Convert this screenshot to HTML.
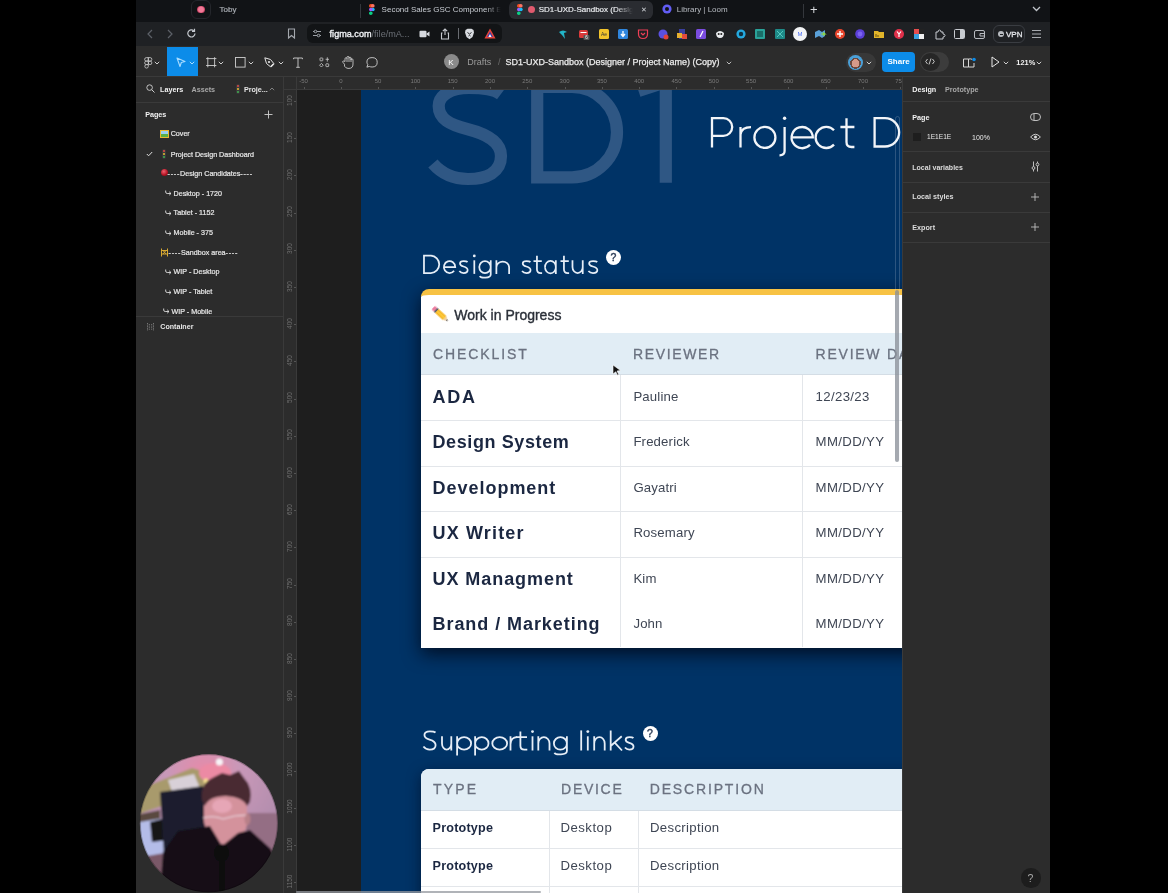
<!DOCTYPE html><html><head><meta charset="utf-8"><style>
html,body{margin:0;padding:0;width:1168px;height:893px;overflow:hidden;background:#000;}
body{position:relative;font-family:'Liberation Sans',sans-serif;will-change:transform;}
.t{position:absolute;white-space:nowrap;}
.r{position:absolute;}
svg{position:absolute;overflow:visible;}
</style></head><body>

<div class="r" style="left:136px;top:0px;width:914px;height:22px;background:#111316;"></div>
<div class="r" style="left:136px;top:22px;width:914px;height:24px;background:#1f2124;"></div>
<div class="r" style="left:191px;top:0px;width:20px;height:19px;background:transparent;border:1px solid #24262b;border-radius:6px;box-sizing:border-box;"></div>
<div class="r" style="left:197.3px;top:5.8px;width:7.5px;height:7.5px;border-radius:50%;background:radial-gradient(circle,#f27a98 0 45%,#c84060 70%,#6a3050 100%);"></div>
<div class="t" style="left:219.6px;top:5.8px;font-size:8px;line-height:8px;color:#a8acb2;font-weight:normal;letter-spacing:0px;-webkit-text-stroke:0.2px #a8acb2;">Toby</div>
<div class="r" style="left:360px;top:4px;width:1px;height:14px;background:#34373c;"></div>
<svg style="left:368px;top:4px" width="7" height="11" viewBox="0 0 7 11"><circle cx="5" cy="5.5" r="1.7" fill="#1abcfe"/><rect x="1" y="0" width="4" height="3.6" rx="1.7" fill="#f24e1e"/><rect x="3" y="0" width="3.6" height="3.6" rx="1.7" fill="#ff7262"/><rect x="1" y="3.7" width="3.6" height="3.6" rx="1.7" fill="#a259ff"/><rect x="1" y="7.4" width="3.6" height="3.6" rx="1.7" fill="#0acf83"/></svg>
<div class="t" style="left:381.6px;top:5.5px;font-size:8px;line-height:8px;color:#c8ccd2;font-weight:normal;letter-spacing:0px;">Second Sales GSC Component Ex</div>
<div class="r" style="left:486px;top:2px;width:20px;height:17px;background:linear-gradient(90deg,rgba(17,19,22,0),#111316 75%);"></div>
<div class="r" style="left:509px;top:1px;width:144px;height:18px;background:#2a2c31;border-radius:6px;"></div>
<svg style="left:516px;top:4px" width="7" height="11" viewBox="0 0 7 11"><rect x="1" y="0" width="4" height="3.6" rx="1.7" fill="#f24e1e"/><rect x="3" y="0" width="3.6" height="3.6" rx="1.7" fill="#ff7262"/><rect x="1" y="3.7" width="3.6" height="3.6" rx="1.7" fill="#a259ff"/><circle cx="5" cy="5.5" r="1.7" fill="#1abcfe"/><rect x="1" y="7.4" width="3.6" height="3.6" rx="1.7" fill="#0acf83"/></svg>
<div class="r" style="left:528px;top:6px;width:7px;height:7px;border-radius:50%;background:#e05a6e;"></div>
<div class="t" style="left:538.7px;top:5.5px;font-size:8px;line-height:8px;color:#eef0f3;font-weight:normal;letter-spacing:0px;-webkit-text-stroke:0.15px #eef0f3;">SD1-UXD-Sandbox (Design</div>
<div class="r" style="left:616px;top:2px;width:24px;height:16px;background:linear-gradient(90deg,rgba(42,44,49,0),#2a2c31 70%);"></div>
<div class="t" style="left:641.0px;top:6.4px;font-size:7px;line-height:7px;color:#d0d3d8;font-weight:normal;letter-spacing:0px;">✕</div>
<svg style="left:662px;top:4px" width="10" height="10" viewBox="0 0 10 10"><circle cx="5" cy="5" r="4.6" fill="#625df5"/><circle cx="5" cy="5" r="2" fill="#111316"/></svg>
<div class="t" style="left:676.7px;top:5.5px;font-size:8px;line-height:8px;color:#b8bcc2;font-weight:normal;letter-spacing:0px;">Library | Loom</div>
<div class="r" style="left:803px;top:4px;width:1px;height:14px;background:#34373c;"></div>
<div class="t" style="left:810.0px;top:2.5px;font-size:13px;line-height:13px;color:#d8dade;font-weight:normal;letter-spacing:0px;">+</div>
<svg style="left:1032px;top:6px" width="9" height="6" viewBox="0 0 9 6"><path d="M1 1 L4.5 4.5 L8 1" stroke="#c0c4ca" stroke-width="1.3" fill="none"/></svg>
<svg style="left:146px;top:29px" width="8" height="10" viewBox="0 0 8 10"><path d="M6 1 L2 5 L6 9" stroke="#5d6168" stroke-width="1.2" fill="none"/></svg>
<svg style="left:166px;top:29px" width="8" height="10" viewBox="0 0 8 10"><path d="M2 1 L6 5 L2 9" stroke="#5d6168" stroke-width="1.2" fill="none"/></svg>
<svg style="left:186px;top:28px" width="11" height="11" viewBox="0 0 11 11"><path d="M9 5.5 A3.6 3.6 0 1 1 7.8 2.7" stroke="#c4c8ce" stroke-width="1.2" fill="none"/><path d="M8.5 0.8 L8.5 3.3 L6 3.3" stroke="#c4c8ce" stroke-width="1.2" fill="none"/></svg>
<svg style="left:287px;top:28px" width="9" height="11" viewBox="0 0 9 11"><path d="M1.5 1 H7.5 V10 L4.5 7.5 L1.5 10 Z" stroke="#a4a8ae" stroke-width="1.1" fill="none"/></svg>
<div class="r" style="left:307px;top:24px;width:195px;height:19px;background:#121416;border-radius:6px;"></div>
<svg style="left:312px;top:29px" width="10" height="9" viewBox="0 0 10 9"><path d="M1 2.5 H9 M1 6.5 H9" stroke="#9ca0a6" stroke-width="1"/><circle cx="3.5" cy="2.5" r="1.3" fill="#121416" stroke="#9ca0a6" stroke-width="1"/><circle cx="6.5" cy="6.5" r="1.3" fill="#121416" stroke="#9ca0a6" stroke-width="1"/></svg>
<div class="t" style="left:329.6px;top:30.1px;font-size:9.1px;line-height:9.1px;color:#f0f2f5;font-weight:normal;letter-spacing:0px;"><span style='-webkit-text-stroke:0.35px #f0f2f5'>figma.com</span><span style='color:#6d7178'>/file/mA...</span></div>
<svg style="left:419px;top:30px" width="11" height="8" viewBox="0 0 11 8"><rect x="0.5" y="0.8" width="7" height="6.4" rx="1" fill="#d6d9de"/><path d="M7.5 3.5 L10.5 1.5 V6.5 L7.5 4.5Z" fill="#d6d9de"/></svg>
<svg style="left:440px;top:28px" width="10" height="12" viewBox="0 0 10 12"><path d="M5 1 V7 M2.8 3.2 L5 1 L7.2 3.2" stroke="#c6c9ce" stroke-width="1.1" fill="none"/><path d="M2.5 5 H1.5 V11 H8.5 V5 H7.5" stroke="#c6c9ce" stroke-width="1.1" fill="none"/></svg>
<div class="r" style="left:458px;top:28px;width:1px;height:11px;background:#6a6d72;"></div>
<svg style="left:464px;top:28px" width="11" height="12" viewBox="0 0 11 12"><path d="M1.5 2 L3.5 0.7 H7.5 L9.5 2 L10 4.5 L8.5 9 L5.5 11.3 L2.5 9 L1 4.5Z" fill="#d8dbe0"/><path d="M3.5 4.5 L5.5 6 L7.5 4.5 M4.5 8 L5.5 7.3 L6.5 8" stroke="#121416" stroke-width="0.9" fill="none"/></svg>
<svg style="left:484px;top:28px" width="12" height="11" viewBox="0 0 12 11"><path d="M6 0.5 L11.5 10.5 H0.5Z" fill="#e8443a"/><path d="M6 3.5 L9 9 H3Z" fill="#3c3ea8"/><path d="M6 6 L7.6 9 H4.4Z" fill="#fff"/></svg>
<svg style="left:557.6px;top:29px" width="11" height="11" viewBox="0 0 11 11"><path d="M1 3 Q5 0 9 3 L6 4 L7 10 L4 6 Z" fill="#22b5c8"/></svg>
<svg style="left:578.6px;top:29px" width="11" height="11" viewBox="0 0 11 11"><rect x="0" y="1" width="9" height="8" rx="1.5" fill="#d93a3a"/><rect x="1.5" y="3" width="6" height="1" fill="#fff"/><rect x="4.5" y="6" width="6" height="5" rx="1" fill="#555"/><text x="7.5" y="10.3" font-size="4.5" fill="#fff" text-anchor="middle" font-family="Liberation Sans">6</text></svg>
<svg style="left:598.8px;top:29px" width="11" height="11" viewBox="0 0 11 11"><rect x="0" y="0" width="10" height="10" rx="1.5" fill="#f3c42c"/><text x="5" y="7" font-size="5" fill="#333" text-anchor="middle" font-family="Liberation Sans">Ae</text></svg>
<svg style="left:617.6px;top:29px" width="11" height="11" viewBox="0 0 11 11"><rect x="0" y="0" width="10" height="10" rx="1.5" fill="#2f86de"/><path d="M5 2 V7 M3 5 L5 7.5 L7 5" stroke="#fff" stroke-width="1.3" fill="none"/></svg>
<svg style="left:637.7px;top:29px" width="11" height="11" viewBox="0 0 11 11"><path d="M0.5 1 H9.5 V5 Q9.5 9.5 5 9.5 Q0.5 9.5 0.5 5Z" fill="none" stroke="#ef3f56" stroke-width="1.2"/><path d="M3 4 L5 6 L7 4" stroke="#ef3f56" stroke-width="1.2" fill="none"/></svg>
<svg style="left:657.5px;top:29px" width="11" height="11" viewBox="0 0 11 11"><circle cx="5" cy="5" r="4.5" fill="#5a50e0"/><circle cx="8" cy="8" r="2.5" fill="#e2433a"/></svg>
<svg style="left:677.0px;top:29px" width="11" height="11" viewBox="0 0 11 11"><rect x="2" y="0" width="6" height="10" fill="#3a3f9e"/><rect x="0" y="4" width="5" height="5" fill="#e6b030"/><rect x="5" y="5" width="5" height="5" fill="#e04c3c"/></svg>
<svg style="left:696.2px;top:29px" width="11" height="11" viewBox="0 0 11 11"><rect x="0" y="0" width="10" height="10" rx="1.5" fill="#7a4cdf"/><path d="M4 8 L7 2" stroke="#fff" stroke-width="1.3"/></svg>
<svg style="left:715.0px;top:29px" width="11" height="11" viewBox="0 0 11 11"><path d="M1 4 Q5 0 9 4 Q9 9 5 9 Q1 9 1 4Z" fill="#e9ebee"/><circle cx="3.7" cy="5" r="1" fill="#222"/><circle cx="6.3" cy="5" r="1" fill="#222"/></svg>
<svg style="left:736.0px;top:29px" width="11" height="11" viewBox="0 0 11 11"><circle cx="5" cy="5" r="4.6" fill="#24a9e0"/><circle cx="5" cy="5" r="2.2" fill="#103040"/></svg>
<svg style="left:755.0px;top:29px" width="11" height="11" viewBox="0 0 11 11"><rect x="0" y="0" width="10" height="10" rx="1" fill="#2aa39a"/><rect x="2" y="2" width="6" height="6" fill="#1a6f6a"/></svg>
<svg style="left:774.5px;top:29px" width="11" height="11" viewBox="0 0 11 11"><rect x="0" y="0" width="10" height="10" rx="1" fill="#1e8a88"/><path d="M2 2 L8 8 M8 2 L2 8" stroke="#54c8c0" stroke-width="1"/></svg>
<svg style="left:795.3px;top:29px" width="11" height="11" viewBox="0 0 11 11"><circle cx="5" cy="5" r="7" fill="#f3f4f6"/><text x="5" y="7" font-size="6" fill="#4c6ef5" text-anchor="middle" font-family="Liberation Sans">M</text></svg>
<svg style="left:815.3px;top:29px" width="11" height="11" viewBox="0 0 11 11"><path d="M0 3 L4 1 L7 3 L10 1 V7 L7 9 L4 7 L0 9Z" fill="#5aa0d8"/><path d="M6 5 H10 L8 3.5 M10 5 L8 6.5" stroke="#8bd84a" stroke-width="1.2" fill="none"/></svg>
<svg style="left:834.8px;top:29px" width="11" height="11" viewBox="0 0 11 11"><circle cx="5" cy="5" r="5" fill="#e8452c"/><path d="M5 2 V8 M2 5 H8" stroke="#fff" stroke-width="1.4"/></svg>
<svg style="left:854.7px;top:29px" width="11" height="11" viewBox="0 0 11 11"><circle cx="5" cy="5" r="4.8" fill="#5b3fd8"/><circle cx="5" cy="5" r="2.4" fill="#7b63f0"/></svg>
<svg style="left:874.0px;top:29px" width="11" height="11" viewBox="0 0 11 11"><path d="M0 2 H4 L5 3 H10 V9 H0Z" fill="#e2b52a"/><path d="M2 5 V8 M4 6 V8" stroke="#6a5010" stroke-width="1"/></svg>
<svg style="left:894.0px;top:29px" width="11" height="11" viewBox="0 0 11 11"><circle cx="5" cy="5" r="5" fill="#e0304a"/><path d="M3 2.5 L5 5 L7 2.5 M5 5 V8" stroke="#fff" stroke-width="1.2" fill="none"/></svg>
<svg style="left:913.9px;top:29px" width="11" height="11" viewBox="0 0 11 11"><rect x="0" y="0" width="5" height="5" fill="#e84d4d"/><rect x="5" y="0" width="5" height="5" fill="#222"/><rect x="0" y="5" width="5" height="5" fill="#3aa0e0"/><rect x="5" y="5" width="5" height="5" fill="#f0f0f0"/></svg>
<svg style="left:933.8px;top:29px" width="11" height="11" viewBox="0 0 11 11"><path d="M2 3 H4 Q4 1 5.5 1 Q7 1 7 3 H9 V5 Q11 5 11 6.5 Q11 8 9 8 V10 H2Z" fill="none" stroke="#c8cbd0" stroke-width="1"/></svg>
<svg style="left:953.7px;top:29px" width="11" height="11" viewBox="0 0 11 11"><rect x="0.5" y="0.5" width="10" height="9" rx="1" fill="none" stroke="#c8cbd0" stroke-width="1"/><rect x="6" y="1" width="4" height="8" fill="#c8cbd0"/></svg>
<svg style="left:974.3px;top:29px" width="11" height="11" viewBox="0 0 11 11"><rect x="0.5" y="1.5" width="10" height="8" rx="1.5" fill="none" stroke="#b8bbc0" stroke-width="1"/><path d="M6 4.5 H10.5 V7 H6Z" fill="none" stroke="#b8bbc0" stroke-width="1"/></svg>
<div class="r" style="left:993px;top:25px;width:32px;height:18px;background:transparent;border:1px solid #3a3d42;border-radius:6px;box-sizing:border-box;"></div>
<div class="r" style="left:998px;top:31px;width:6px;height:6px;border-radius:50%;background:#b8bbc0;"></div>
<div class="r" style="left:999.5px;top:33.5px;width:3px;height:1px;background:#1f2124;"></div>
<div class="t" style="left:1006.0px;top:30.5px;font-size:8px;line-height:8px;color:#e4e6ea;font-weight:normal;letter-spacing:0px;-webkit-text-stroke:0.3px #e4e6ea;">VPN</div>
<svg style="left:1031px;top:29px" width="11" height="10" viewBox="0 0 11 10"><path d="M1 1.5 H10 M1 5 H10 M1 8.5 H10" stroke="#a8abb0" stroke-width="1.1"/></svg>
<div class="r" style="left:136px;top:46px;width:914px;height:30px;background:#2c2c2c;"></div>
<div class="r" style="left:136px;top:76px;width:914px;height:1px;background:#3a3a3a;"></div>
<div class="r" style="left:167px;top:47px;width:31px;height:29px;background:#0c8ce9;"></div>
<svg style="left:144px;top:56.5px" width="9" height="12" viewBox="0 0 9 12"><g fill="none" stroke="#cfcfcf" stroke-width="0.8"><path d="M4.3,0.6 H2.4 A1.75,1.75 0 0 0 2.4,4.1 H4.3Z"/><path d="M4.3,0.6 H6.1 A1.75,1.75 0 0 1 6.1,4.1 H4.3Z"/><path d="M4.3,4.1 H2.4 A1.75,1.75 0 0 0 2.4,7.6 H4.3Z"/><circle cx="6.1" cy="5.85" r="1.75"/><path d="M4.3,7.6 H2.4 A1.75,1.75 0 1 0 4.3,9.35Z"/></g></svg>
<svg style="left:154px;top:60.6px" width="6" height="4" viewBox="0 0 6 4"><path d="M0.8 0.8 L3 3 L5.2 0.8" stroke="#cfcfcf" stroke-width="1" fill="none"/></svg>
<svg style="left:175.5px;top:57px" width="10" height="11" viewBox="0 0 10 11"><path d="M1 1 L9 4.5 L5.3 5.5 L4 9.5Z" stroke="#a8dcff" stroke-width="1.1" fill="none" stroke-linejoin="round"/></svg>
<svg style="left:188.7px;top:61.1px" width="6" height="4" viewBox="0 0 6 4"><path d="M0.8 0.8 L3 3 L5.2 0.8" stroke="#a8dcff" stroke-width="1" fill="none"/></svg>
<svg style="left:205.5px;top:57px" width="11" height="11" viewBox="0 0 11 11"><path d="M1.8 0.2 V10.3 M8.6 0.2 V10.3 M0.1 1.6 H10.4 M0.1 8.5 H10.4" stroke="#cfcfcf" stroke-width="0.9"/></svg>
<svg style="left:218px;top:60.6px" width="6" height="4" viewBox="0 0 6 4"><path d="M0.8 0.8 L3 3 L5.2 0.8" stroke="#cfcfcf" stroke-width="1" fill="none"/></svg>
<svg style="left:234.5px;top:57px" width="11" height="11" viewBox="0 0 11 11"><rect x="0.5" y="0.5" width="9.6" height="9.6" stroke="#c8c8c8" stroke-width="0.95" fill="none"/></svg>
<svg style="left:247.6px;top:60.6px" width="6" height="4" viewBox="0 0 6 4"><path d="M0.8 0.8 L3 3 L5.2 0.8" stroke="#cfcfcf" stroke-width="1" fill="none"/></svg>
<svg style="left:264px;top:57px" width="11" height="11" viewBox="0 0 11 11"><path d="M0.8 0.8 L6.5 2.5 L9.8 6.5 L6.5 9.8 L2.5 6.5Z" stroke="#e6e6e6" stroke-width="1" fill="none" stroke-linejoin="round"/><circle cx="5" cy="5" r="1.1" fill="#e6e6e6"/><path d="M6.8 9.8 L9.8 6.8" stroke="#e6e6e6" stroke-width="1.6"/></svg>
<svg style="left:277.7px;top:60.6px" width="6" height="4" viewBox="0 0 6 4"><path d="M0.8 0.8 L3 3 L5.2 0.8" stroke="#cfcfcf" stroke-width="1" fill="none"/></svg>
<svg style="left:293px;top:57px" width="10" height="11" viewBox="0 0 10 11"><path d="M0.6 2.2 V1 H9.4 V2.2 M5 1 V10.3 M3.2 10.3 H6.8" stroke="#cfcfcf" stroke-width="0.9" fill="none"/></svg>
<svg style="left:318.5px;top:57px" width="11" height="11" viewBox="0 0 11 11"><g stroke="#cfcfcf" stroke-width="0.8" fill="none"><rect x="1" y="1" width="2.8" height="2.8" rx="0.5"/><path d="M8.3 0.3 V4.6 M6.6 2.3 H10"/><path d="M2.4 6.4 L4.2 8.2 L2.4 10 L0.6 8.2Z"/><rect x="6.9" y="6.8" width="2.8" height="2.8" rx="0.5"/></g></svg>
<svg style="left:342px;top:56px" width="12" height="13" viewBox="0 0 12 13"><g stroke="#d0d0d0" stroke-width="0.85" fill="none" stroke-linejoin="round"><path d="M2.5,8.2 L1,6.5 Q0.3,5.5 1.2,5 Q2,4.6 3,5.6 V2.7 Q3,1.7 4,1.7 Q5,1.7 5,2.7 V1.4 Q5,0.4 6,0.4 Q7,0.4 7,1.4 V2.2 Q7,1.2 8,1.2 Q9,1.2 9,2.2 V3.8 Q9,2.9 10,2.9 Q11,2.9 11,3.9 V8 Q11,12.4 7,12.4 H6 Q4,12.4 2.5,10.2Z"/><path d="M5,2.7 V6 M7,1.4 V6 M9,2.2 V6"/></g></svg>
<svg style="left:366px;top:57px" width="12" height="11" viewBox="0 0 12 11"><path d="M0.9 10.2 L1.8 7.6 Q0.9 6.3 0.9 5.1 Q0.9 0.6 6.1 0.6 Q11.2 0.6 11.2 5.3 Q11.2 10 6.1 10 Q4.6 10 3.3 9.4Z" stroke="#d0d0d0" stroke-width="0.9" fill="none" stroke-linejoin="round"/></svg>
<div class="r" style="left:444px;top:54px;width:15px;height:15px;border-radius:50%;background:#8a8a8a;"></div>
<div class="t" style="left:448.3px;top:58.5px;font-size:8px;line-height:8px;color:#fff;font-weight:normal;letter-spacing:0px;">K</div>
<div class="t" style="left:467.3px;top:57.9px;font-size:9px;line-height:9px;color:#9a9a9a;font-weight:normal;letter-spacing:0px;">Drafts</div>
<div class="t" style="left:498.0px;top:57.9px;font-size:9px;line-height:9px;color:#6a6a6a;font-weight:normal;letter-spacing:0px;">/</div>
<div class="t" style="left:505.5px;top:57.9px;font-size:9.0px;line-height:9.0px;color:#ececec;font-weight:normal;letter-spacing:0px;-webkit-text-stroke:0.25px #ececec;">SD1-UXD-Sandbox (Designer / Project Name) (Copy)</div>
<svg style="left:726px;top:60.6px" width="6" height="4" viewBox="0 0 6 4"><path d="M0.8 0.8 L3 3 L5.2 0.8" stroke="#bdbdbd" stroke-width="1" fill="none"/></svg>
<div class="r" style="left:846px;top:53px;width:30px;height:19px;background:#383838;border-radius:10px;"></div>
<div class="r" style="left:848px;top:55px;width:15px;height:15px;border-radius:50%;background:radial-gradient(circle at 50% 55%,#d49a8a 0 35%,#6a4a40 36% 48%,#4aa0d8 49% 100%);"></div>
<svg style="left:866.3px;top:60.6px" width="6" height="4" viewBox="0 0 6 4"><path d="M0.8 0.8 L3 3 L5.2 0.8" stroke="#cfcfcf" stroke-width="1" fill="none"/></svg>
<div class="r" style="left:882px;top:52px;width:33px;height:20px;background:#0c8ce9;border-radius:4px;"></div>
<div class="t" style="left:887.5px;top:58.2px;font-size:8px;line-height:8px;color:#fff;font-weight:bold;letter-spacing:0px;">Share</div>
<div class="r" style="left:920px;top:52px;width:29px;height:20px;background:#3c3c3c;border-radius:10px;"></div>
<div class="r" style="left:921px;top:53px;width:19px;height:18px;border-radius:50%;background:#262626;"></div>
<svg style="left:925px;top:58px" width="10" height="7" viewBox="0 0 10 7"><path d="M2.5 1 L0.7 3.5 L2.5 6 M7.5 1 L9.3 3.5 L7.5 6 M6 0.5 L4 6.5" stroke="#d8d8d8" stroke-width="0.9" fill="none"/></svg>
<svg style="left:963px;top:57px" width="13" height="11" viewBox="0 0 13 11"><path d="M0.5 2 H5.5 V10 H0.5Z M5.5 2 Q8 1.6 9 2.3 M5.5 10 H11 V6" stroke="#d8d8d8" stroke-width="1" fill="none"/><circle cx="11" cy="2.5" r="1.8" fill="#0c8ce9"/></svg>
<svg style="left:991px;top:56px" width="9" height="12" viewBox="0 0 9 12"><path d="M1 1 L8 6 L1 11Z" stroke="#e6e6e6" stroke-width="1" fill="none" stroke-linejoin="round"/></svg>
<svg style="left:1002.5px;top:60.6px" width="6" height="4" viewBox="0 0 6 4"><path d="M0.8 0.8 L3 3 L5.2 0.8" stroke="#cfcfcf" stroke-width="1" fill="none"/></svg>
<div class="t" style="left:1016.3px;top:59.0px;font-size:7.4px;line-height:7.4px;color:#f0f0f0;font-weight:bold;letter-spacing:0px;">121%</div>
<svg style="left:1036.4px;top:60.6px" width="6" height="4" viewBox="0 0 6 4"><path d="M0.8 0.8 L3 3 L5.2 0.8" stroke="#cfcfcf" stroke-width="1" fill="none"/></svg>
<div class="r" style="left:136px;top:77px;width:148px;height:816px;background:#2c2c2c;"></div>
<div class="r" style="left:283px;top:77px;width:1px;height:816px;background:#3a3a3a;"></div>
<svg style="left:146px;top:84px" width="9" height="9" viewBox="0 0 9 9"><circle cx="3.6" cy="3.6" r="2.8" stroke="#d0d0d0" stroke-width="0.9" fill="none"/><path d="M5.7 5.7 L8.5 8.5" stroke="#d0d0d0" stroke-width="1"/></svg>
<div class="t" style="left:160.0px;top:85.7px;font-size:7.2px;line-height:7.2px;color:#f2f2f2;font-weight:bold;letter-spacing:0px;">Layers</div>
<div class="t" style="left:191.5px;top:85.7px;font-size:7.2px;line-height:7.2px;color:#a8a8a8;font-weight:bold;letter-spacing:0px;">Assets</div>
<div class="r" style="left:235.5px;top:84px;width:4px;height:10px;border-radius:2px;background:#3a3a3a;"></div>
<div class="r" style="left:236.5px;top:85px;width:2px;height:2px;border-radius:50%;background:#e04848;"></div><div class="r" style="left:236.5px;top:88px;width:2px;height:2px;border-radius:50%;background:#e8c030;"></div><div class="r" style="left:236.5px;top:91px;width:2px;height:2px;border-radius:50%;background:#40b050;"></div>
<div class="t" style="left:243.9px;top:85.7px;font-size:7.2px;line-height:7.2px;color:#e6e6e6;font-weight:bold;letter-spacing:0px;">Proje...</div>
<svg style="left:269px;top:87px" width="6" height="4" viewBox="0 0 6 4"><path d="M0.8 3.2 L3 1 L5.2 3.2" stroke="#8a8a8a" stroke-width="0.9" fill="none"/></svg>
<div class="r" style="left:136px;top:102px;width:148px;height:1px;background:#3a3a3a;"></div>
<div class="t" style="left:145.2px;top:110.9px;font-size:7.2px;line-height:7.2px;color:#f2f2f2;font-weight:bold;letter-spacing:0px;">Pages</div>
<svg style="left:264px;top:110px" width="9" height="9" viewBox="0 0 9 9"><path d="M4.5 0.5 V8.5 M0.5 4.5 H8.5" stroke="#d0d0d0" stroke-width="0.9"/></svg>
<div class="r" style="left:160px;top:130px;width:9px;height:8px;background:#e8b830;"></div><div class="r" style="left:161px;top:131px;width:7px;height:6px;background:linear-gradient(#9ad0f0 0 50%,#58b048 50%);"></div>
<div class="t" style="left:170.7px;top:131.3px;font-size:7.15px;line-height:7.15px;color:#e8e8e8;font-weight:normal;letter-spacing:0px;-webkit-text-stroke:0.2px #e8e8e8;">Cover</div>
<svg style="left:145.5px;top:150.5px" width="7" height="6" viewBox="0 0 7 6"><path d="M0.8 3 L2.6 4.8 L6.2 1" stroke="#e0e0e0" stroke-width="1" fill="none"/></svg>
<div class="r" style="left:162px;top:149px;width:4px;height:10px;border-radius:2px;background:#3a3a3a;"></div>
<div class="r" style="left:163px;top:150px;width:2px;height:2px;border-radius:50%;background:#e04848;"></div><div class="r" style="left:163px;top:153px;width:2px;height:2px;border-radius:50%;background:#e8c030;"></div><div class="r" style="left:163px;top:156px;width:2px;height:2px;border-radius:50%;background:#40b050;"></div>
<div class="t" style="left:170.7px;top:151.5px;font-size:7.15px;line-height:7.15px;color:#e8e8e8;font-weight:normal;letter-spacing:0px;-webkit-text-stroke:0.2px #e8e8e8;">Project Design Dashboard</div>
<div class="r" style="left:161px;top:169px;width:7px;height:7px;border-radius:50%;background:radial-gradient(circle at 40% 35%,#f06070,#b01020 60%,#601018);"></div>
<div class="t" style="left:167.5px;top:170.6px;font-size:7.15px;line-height:7.15px;color:#e8e8e8;font-weight:normal;letter-spacing:0px;-webkit-text-stroke:0.2px #e8e8e8;"><span style='letter-spacing:0.75px'>----</span>Design Candidates<span style='letter-spacing:0.75px'>----</span></div>
<svg style="left:164.5px;top:190.4px" width="7" height="6" viewBox="0 0 7 6"><path d="M0.7 0.5 V2 Q0.7 3.5 2.2 3.5 H6 M4.2 1.8 L6 3.5 L4.2 5.2" stroke="#e0e0e0" stroke-width="0.9" fill="none"/></svg>
<div class="t" style="left:173.6px;top:190.5px;font-size:7.15px;line-height:7.15px;color:#e8e8e8;font-weight:normal;letter-spacing:0px;-webkit-text-stroke:0.2px #e8e8e8;">Desktop - 1720</div>
<svg style="left:164.5px;top:210px" width="7" height="6" viewBox="0 0 7 6"><path d="M0.7 0.5 V2 Q0.7 3.5 2.2 3.5 H6 M4.2 1.8 L6 3.5 L4.2 5.2" stroke="#e0e0e0" stroke-width="0.9" fill="none"/></svg>
<div class="t" style="left:173.6px;top:210.1px;font-size:7.15px;line-height:7.15px;color:#e8e8e8;font-weight:normal;letter-spacing:0px;-webkit-text-stroke:0.2px #e8e8e8;">Tablet - 1152</div>
<svg style="left:164.5px;top:229.5px" width="7" height="6" viewBox="0 0 7 6"><path d="M0.7 0.5 V2 Q0.7 3.5 2.2 3.5 H6 M4.2 1.8 L6 3.5 L4.2 5.2" stroke="#e0e0e0" stroke-width="0.9" fill="none"/></svg>
<div class="t" style="left:173.6px;top:229.6px;font-size:7.15px;line-height:7.15px;color:#e8e8e8;font-weight:normal;letter-spacing:0px;-webkit-text-stroke:0.2px #e8e8e8;">Mobile - 375</div>
<svg style="left:159.7px;top:248px" width="9" height="9" viewBox="0 0 9 9"><path d="M1.5 0.5 V8.5 M7.5 0.5 V8.5 M1.5 2.5 H7.5 M1.5 6 H7.5 M3 2.5 L6 6 M6 2.5 L3 6" stroke="#d8a830" stroke-width="1" fill="none"/></svg>
<div class="t" style="left:168.6px;top:249.5px;font-size:7.15px;line-height:7.15px;color:#e8e8e8;font-weight:normal;letter-spacing:0px;-webkit-text-stroke:0.2px #e8e8e8;"><span style='letter-spacing:0.75px'>----</span>Sandbox area<span style='letter-spacing:0.75px'>----</span></div>
<svg style="left:164.5px;top:269px" width="7" height="6" viewBox="0 0 7 6"><path d="M0.7 0.5 V2 Q0.7 3.5 2.2 3.5 H6 M4.2 1.8 L6 3.5 L4.2 5.2" stroke="#e0e0e0" stroke-width="0.9" fill="none"/></svg>
<div class="t" style="left:173.6px;top:269.1px;font-size:7.15px;line-height:7.15px;color:#e8e8e8;font-weight:normal;letter-spacing:0px;-webkit-text-stroke:0.2px #e8e8e8;">WIP - Desktop</div>
<svg style="left:164.5px;top:288.8px" width="7" height="6" viewBox="0 0 7 6"><path d="M0.7 0.5 V2 Q0.7 3.5 2.2 3.5 H6 M4.2 1.8 L6 3.5 L4.2 5.2" stroke="#e0e0e0" stroke-width="0.9" fill="none"/></svg>
<div class="t" style="left:173.6px;top:288.9px;font-size:7.15px;line-height:7.15px;color:#e8e8e8;font-weight:normal;letter-spacing:0px;-webkit-text-stroke:0.2px #e8e8e8;">WIP - Tablet</div>
<svg style="left:162.5px;top:308.4px" width="7" height="6" viewBox="0 0 7 6"><path d="M0.7 0.5 V2 Q0.7 3.5 2.2 3.5 H6 M4.2 1.8 L6 3.5 L4.2 5.2" stroke="#e0e0e0" stroke-width="0.9" fill="none"/></svg>
<div class="t" style="left:171.5px;top:308.5px;font-size:7.15px;line-height:7.15px;color:#e8e8e8;font-weight:normal;letter-spacing:0px;-webkit-text-stroke:0.2px #e8e8e8;">WIP - Mobile</div>
<div class="r" style="left:136px;top:316px;width:148px;height:1px;background:#3a3a3a;"></div>
<svg style="left:147px;top:323px" width="7" height="8" viewBox="0 0 7 8"><path d="M0.5 0 V8 M6.5 0 V8 M2.3 1 V7 M4.7 1 V7" stroke="#9a9a9a" stroke-width="0.7" stroke-dasharray="1 0.6"/></svg>
<div class="t" style="left:160.3px;top:323.8px;font-size:7.1px;line-height:7.1px;color:#e8e8e8;font-weight:bold;letter-spacing:0px;">Container</div>
<div class="r" style="left:902px;top:77px;width:148px;height:816px;background:#2c2c2c;"></div>
<div class="r" style="left:902px;top:77px;width:1px;height:816px;background:#3a3a3a;"></div>
<div class="t" style="left:912.3px;top:85.9px;font-size:7.2px;line-height:7.2px;color:#f2f2f2;font-weight:bold;letter-spacing:0px;">Design</div>
<div class="t" style="left:945.0px;top:85.9px;font-size:7.2px;line-height:7.2px;color:#a8a8a8;font-weight:bold;letter-spacing:0px;">Prototype</div>
<div class="r" style="left:903px;top:101px;width:147px;height:1px;background:#3a3a3a;"></div>
<div class="t" style="left:912.3px;top:113.7px;font-size:7.2px;line-height:7.2px;color:#f2f2f2;font-weight:bold;letter-spacing:0px;">Page</div>
<svg style="left:1030px;top:113px" width="11" height="8" viewBox="0 0 11 8"><rect x="0.5" y="0.5" width="10" height="7" rx="3.5" stroke="#cfcfcf" stroke-width="0.9" fill="none"/><path d="M4 1 V7" stroke="#cfcfcf" stroke-width="0.9"/></svg>
<div class="r" style="left:913px;top:133px;width:8px;height:8px;background:#1e1e1e;"></div>
<div class="t" style="left:927.0px;top:134.0px;font-size:6.6px;line-height:6.6px;color:#e8e8e8;font-weight:normal;letter-spacing:0px;">1E1E1E</div>
<div class="t" style="left:972.0px;top:133.7px;font-size:7px;line-height:7px;color:#e8e8e8;font-weight:normal;letter-spacing:0px;">100%</div>
<svg style="left:1030px;top:133px" width="11" height="8" viewBox="0 0 11 8"><path d="M0.6 4 Q5.5 -1.5 10.4 4 Q5.5 9.5 0.6 4Z" stroke="#dcdcdc" stroke-width="0.9" fill="none"/><circle cx="5.5" cy="4" r="1.5" fill="#dcdcdc"/></svg>
<div class="r" style="left:903px;top:151px;width:147px;height:1px;background:#3a3a3a;"></div>
<div class="t" style="left:912.3px;top:163.5px;font-size:7.0px;line-height:7.0px;color:#dcdcdc;font-weight:bold;letter-spacing:0px;">Local variables</div>
<svg style="left:1031px;top:161px" width="9" height="11" viewBox="0 0 9 11"><path d="M2.5 0.5 V10.5 M6.5 0.5 V10.5" stroke="#cfcfcf" stroke-width="0.9"/><circle cx="2.5" cy="7" r="1.4" fill="#2c2c2c" stroke="#cfcfcf" stroke-width="0.9"/><circle cx="6.5" cy="3.5" r="1.4" fill="#2c2c2c" stroke="#cfcfcf" stroke-width="0.9"/></svg>
<div class="r" style="left:903px;top:182px;width:147px;height:1px;background:#3a3a3a;"></div>
<div class="t" style="left:912.3px;top:193.4px;font-size:7.2px;line-height:7.2px;color:#dcdcdc;font-weight:bold;letter-spacing:0px;">Local styles</div>
<svg style="left:1031px;top:193px" width="8" height="8" viewBox="0 0 8 8"><path d="M4 0 V8 M0 4 H8" stroke="#bdbdbd" stroke-width="0.9"/></svg>
<div class="r" style="left:903px;top:212px;width:147px;height:1px;background:#3a3a3a;"></div>
<div class="t" style="left:912.3px;top:223.8px;font-size:7.2px;line-height:7.2px;color:#dcdcdc;font-weight:bold;letter-spacing:0px;">Export</div>
<svg style="left:1031px;top:223px" width="8" height="8" viewBox="0 0 8 8"><path d="M4 0 V8 M0 4 H8" stroke="#bdbdbd" stroke-width="0.9"/></svg>
<div class="r" style="left:903px;top:242px;width:147px;height:1px;background:#3a3a3a;"></div>
<div class="r" style="left:1021px;top:868px;width:19.5px;height:19.5px;border-radius:50%;background:#1d1d1d;"></div>
<div class="t" style="left:1027.5px;top:873.1px;font-size:10.5px;line-height:10.5px;color:#a8a8a8;font-weight:normal;letter-spacing:0px;">?</div>
<div class="r" style="left:284px;top:77px;width:618px;height:13px;background:#2c2c2c;"></div>
<div class="r" style="left:284px;top:77px;width:13px;height:816px;background:#2c2c2c;"></div>
<div class="r" style="left:284px;top:89px;width:618px;height:1px;background:#3a3a3a;"></div>
<div class="r" style="left:296px;top:77px;width:1px;height:816px;background:#3a3a3a;"></div>
<div class="r" style="left:297px;top:90px;width:605px;height:803px;background:#1e1e1e;"></div>
<div class="r" style="left:0;top:0;width:902px;height:90px;overflow:hidden;">
<div class="t" style="left:283.5px;top:78px;width:40px;text-align:center;font-size:6px;line-height:7px;color:#7a7a7a;">-50</div>
<div class="r" style="left:304px;top:87px;width:1px;height:2px;background:#555555;"></div>
<div class="t" style="left:320.8px;top:78px;width:40px;text-align:center;font-size:6px;line-height:7px;color:#7a7a7a;">0</div>
<div class="r" style="left:341px;top:87px;width:1px;height:2px;background:#555555;"></div>
<div class="t" style="left:358.1px;top:78px;width:40px;text-align:center;font-size:6px;line-height:7px;color:#7a7a7a;">50</div>
<div class="r" style="left:378px;top:87px;width:1px;height:2px;background:#555555;"></div>
<div class="t" style="left:395.4px;top:78px;width:40px;text-align:center;font-size:6px;line-height:7px;color:#7a7a7a;">100</div>
<div class="r" style="left:415px;top:87px;width:1px;height:2px;background:#555555;"></div>
<div class="t" style="left:432.7px;top:78px;width:40px;text-align:center;font-size:6px;line-height:7px;color:#7a7a7a;">150</div>
<div class="r" style="left:453px;top:87px;width:1px;height:2px;background:#555555;"></div>
<div class="t" style="left:470.0px;top:78px;width:40px;text-align:center;font-size:6px;line-height:7px;color:#7a7a7a;">200</div>
<div class="r" style="left:490px;top:87px;width:1px;height:2px;background:#555555;"></div>
<div class="t" style="left:507.3px;top:78px;width:40px;text-align:center;font-size:6px;line-height:7px;color:#7a7a7a;">250</div>
<div class="r" style="left:527px;top:87px;width:1px;height:2px;background:#555555;"></div>
<div class="t" style="left:544.6px;top:78px;width:40px;text-align:center;font-size:6px;line-height:7px;color:#7a7a7a;">300</div>
<div class="r" style="left:565px;top:87px;width:1px;height:2px;background:#555555;"></div>
<div class="t" style="left:581.9px;top:78px;width:40px;text-align:center;font-size:6px;line-height:7px;color:#7a7a7a;">350</div>
<div class="r" style="left:602px;top:87px;width:1px;height:2px;background:#555555;"></div>
<div class="t" style="left:619.2px;top:78px;width:40px;text-align:center;font-size:6px;line-height:7px;color:#7a7a7a;">400</div>
<div class="r" style="left:639px;top:87px;width:1px;height:2px;background:#555555;"></div>
<div class="t" style="left:656.5px;top:78px;width:40px;text-align:center;font-size:6px;line-height:7px;color:#7a7a7a;">450</div>
<div class="r" style="left:676px;top:87px;width:1px;height:2px;background:#555555;"></div>
<div class="t" style="left:693.8px;top:78px;width:40px;text-align:center;font-size:6px;line-height:7px;color:#7a7a7a;">500</div>
<div class="r" style="left:714px;top:87px;width:1px;height:2px;background:#555555;"></div>
<div class="t" style="left:731.1px;top:78px;width:40px;text-align:center;font-size:6px;line-height:7px;color:#7a7a7a;">550</div>
<div class="r" style="left:751px;top:87px;width:1px;height:2px;background:#555555;"></div>
<div class="t" style="left:768.4px;top:78px;width:40px;text-align:center;font-size:6px;line-height:7px;color:#7a7a7a;">600</div>
<div class="r" style="left:788px;top:87px;width:1px;height:2px;background:#555555;"></div>
<div class="t" style="left:805.7px;top:78px;width:40px;text-align:center;font-size:6px;line-height:7px;color:#7a7a7a;">650</div>
<div class="r" style="left:826px;top:87px;width:1px;height:2px;background:#555555;"></div>
<div class="t" style="left:843.0px;top:78px;width:40px;text-align:center;font-size:6px;line-height:7px;color:#7a7a7a;">700</div>
<div class="r" style="left:863px;top:87px;width:1px;height:2px;background:#555555;"></div>
<div class="t" style="left:880.3px;top:78px;width:40px;text-align:center;font-size:6px;line-height:7px;color:#7a7a7a;">750</div>
<div class="r" style="left:900px;top:87px;width:1px;height:2px;background:#555555;"></div>
</div>
<div class="t" style="left:270.5px;top:96.5px;width:40px;text-align:center;font-size:6.5px;line-height:7px;color:#707070;transform:rotate(-90deg);transform-origin:20px 3.5px;left:269px;">100</div>
<div class="r" style="left:294px;top:101px;width:2px;height:1px;background:#555555;"></div>
<div class="t" style="left:270.5px;top:133.7px;width:40px;text-align:center;font-size:6.5px;line-height:7px;color:#707070;transform:rotate(-90deg);transform-origin:20px 3.5px;left:269px;">150</div>
<div class="r" style="left:294px;top:138px;width:2px;height:1px;background:#555555;"></div>
<div class="t" style="left:270.5px;top:170.9px;width:40px;text-align:center;font-size:6.5px;line-height:7px;color:#707070;transform:rotate(-90deg);transform-origin:20px 3.5px;left:269px;">200</div>
<div class="r" style="left:294px;top:175px;width:2px;height:1px;background:#555555;"></div>
<div class="t" style="left:270.5px;top:208.1px;width:40px;text-align:center;font-size:6.5px;line-height:7px;color:#707070;transform:rotate(-90deg);transform-origin:20px 3.5px;left:269px;">250</div>
<div class="r" style="left:294px;top:213px;width:2px;height:1px;background:#555555;"></div>
<div class="t" style="left:270.5px;top:245.3px;width:40px;text-align:center;font-size:6.5px;line-height:7px;color:#707070;transform:rotate(-90deg);transform-origin:20px 3.5px;left:269px;">300</div>
<div class="r" style="left:294px;top:250px;width:2px;height:1px;background:#555555;"></div>
<div class="t" style="left:270.5px;top:282.5px;width:40px;text-align:center;font-size:6.5px;line-height:7px;color:#707070;transform:rotate(-90deg);transform-origin:20px 3.5px;left:269px;">350</div>
<div class="r" style="left:294px;top:287px;width:2px;height:1px;background:#555555;"></div>
<div class="t" style="left:270.5px;top:319.7px;width:40px;text-align:center;font-size:6.5px;line-height:7px;color:#707070;transform:rotate(-90deg);transform-origin:20px 3.5px;left:269px;">400</div>
<div class="r" style="left:294px;top:324px;width:2px;height:1px;background:#555555;"></div>
<div class="t" style="left:270.5px;top:356.9px;width:40px;text-align:center;font-size:6.5px;line-height:7px;color:#707070;transform:rotate(-90deg);transform-origin:20px 3.5px;left:269px;">450</div>
<div class="r" style="left:294px;top:361px;width:2px;height:1px;background:#555555;"></div>
<div class="t" style="left:270.5px;top:394.1px;width:40px;text-align:center;font-size:6.5px;line-height:7px;color:#707070;transform:rotate(-90deg);transform-origin:20px 3.5px;left:269px;">500</div>
<div class="r" style="left:294px;top:399px;width:2px;height:1px;background:#555555;"></div>
<div class="t" style="left:270.5px;top:431.3px;width:40px;text-align:center;font-size:6.5px;line-height:7px;color:#707070;transform:rotate(-90deg);transform-origin:20px 3.5px;left:269px;">550</div>
<div class="r" style="left:294px;top:436px;width:2px;height:1px;background:#555555;"></div>
<div class="t" style="left:270.5px;top:468.5px;width:40px;text-align:center;font-size:6.5px;line-height:7px;color:#707070;transform:rotate(-90deg);transform-origin:20px 3.5px;left:269px;">600</div>
<div class="r" style="left:294px;top:473px;width:2px;height:1px;background:#555555;"></div>
<div class="t" style="left:270.5px;top:505.7px;width:40px;text-align:center;font-size:6.5px;line-height:7px;color:#707070;transform:rotate(-90deg);transform-origin:20px 3.5px;left:269px;">650</div>
<div class="r" style="left:294px;top:510px;width:2px;height:1px;background:#555555;"></div>
<div class="t" style="left:270.5px;top:542.9px;width:40px;text-align:center;font-size:6.5px;line-height:7px;color:#707070;transform:rotate(-90deg);transform-origin:20px 3.5px;left:269px;">700</div>
<div class="r" style="left:294px;top:547px;width:2px;height:1px;background:#555555;"></div>
<div class="t" style="left:270.5px;top:580.1px;width:40px;text-align:center;font-size:6.5px;line-height:7px;color:#707070;transform:rotate(-90deg);transform-origin:20px 3.5px;left:269px;">750</div>
<div class="r" style="left:294px;top:585px;width:2px;height:1px;background:#555555;"></div>
<div class="t" style="left:270.5px;top:617.3px;width:40px;text-align:center;font-size:6.5px;line-height:7px;color:#707070;transform:rotate(-90deg);transform-origin:20px 3.5px;left:269px;">800</div>
<div class="r" style="left:294px;top:622px;width:2px;height:1px;background:#555555;"></div>
<div class="t" style="left:270.5px;top:654.5px;width:40px;text-align:center;font-size:6.5px;line-height:7px;color:#707070;transform:rotate(-90deg);transform-origin:20px 3.5px;left:269px;">850</div>
<div class="r" style="left:294px;top:659px;width:2px;height:1px;background:#555555;"></div>
<div class="t" style="left:270.5px;top:691.7px;width:40px;text-align:center;font-size:6.5px;line-height:7px;color:#707070;transform:rotate(-90deg);transform-origin:20px 3.5px;left:269px;">900</div>
<div class="r" style="left:294px;top:696px;width:2px;height:1px;background:#555555;"></div>
<div class="t" style="left:270.5px;top:728.9px;width:40px;text-align:center;font-size:6.5px;line-height:7px;color:#707070;transform:rotate(-90deg);transform-origin:20px 3.5px;left:269px;">950</div>
<div class="r" style="left:294px;top:733px;width:2px;height:1px;background:#555555;"></div>
<div class="t" style="left:270.5px;top:766.1px;width:40px;text-align:center;font-size:6.5px;line-height:7px;color:#707070;transform:rotate(-90deg);transform-origin:20px 3.5px;left:269px;">1000</div>
<div class="r" style="left:294px;top:771px;width:2px;height:1px;background:#555555;"></div>
<div class="t" style="left:270.5px;top:803.3px;width:40px;text-align:center;font-size:6.5px;line-height:7px;color:#707070;transform:rotate(-90deg);transform-origin:20px 3.5px;left:269px;">1050</div>
<div class="r" style="left:294px;top:808px;width:2px;height:1px;background:#555555;"></div>
<div class="t" style="left:270.5px;top:840.5px;width:40px;text-align:center;font-size:6.5px;line-height:7px;color:#707070;transform:rotate(-90deg);transform-origin:20px 3.5px;left:269px;">1100</div>
<div class="r" style="left:294px;top:845px;width:2px;height:1px;background:#555555;"></div>
<div class="t" style="left:270.5px;top:877.7px;width:40px;text-align:center;font-size:6.5px;line-height:7px;color:#707070;transform:rotate(-90deg);transform-origin:20px 3.5px;left:269px;">1150</div>
<div class="r" style="left:294px;top:882px;width:2px;height:1px;background:#555555;"></div>
<div class="r" style="left:361px;top:90px;width:541px;height:803px;background:#003366;overflow:hidden;">
<svg style="left:0;top:0" width="541" height="803" viewBox="361 90 541 803"><g fill="none" stroke="#2f5784" stroke-width="12.2"><path d="M500.7,94.3 C493,88.5 480,88 469,88 C451,88 438.7,95 438.7,106 C438.7,119 450,124.5 467,129 C487,134 501,142 501,156 C501,172 487,179 468,179 C453,179 441,173 432.9,163.6"/><path d="M537.2,87 V177.3 H572 A45,45.15 0 0 0 572,87 Z" stroke-linejoin="miter"/><path d="M665.8,81 V182.8"/><path d="M638.5,91 L665.8,82"/></g><g fill="none" stroke="#f2f5f9" stroke-width="2.3"><path d="M712,147.6 V118.2 H723.4 A8.8,8.8 0 0 1 723.4,135.8 H712"/><path d="M740.5,147.6 V127 M740.5,134.5 Q741.5,127.1 751,127.1"/><circle cx="764.9" cy="137.4" r="10.5"/><path d="M784.6,127 V151 Q784.6,155.3 779.5,155.3"/><path d="M791.6,137.4 H812.8 A10.6,10.6 0 1 0 810,144.8"/><path d="M834,130.2 A10.6,10.6 0 1 0 834,144.6"/><path d="M846.5,118.2 V142 Q846.5,147 851.5,147 H854.4 M840.4,127 H854.4"/><path d="M874.6,118.2 V146.5 H885 A14.15,14.15 0 0 0 885,118.2 Z"/></g><circle cx="784.6" cy="118.3" r="1.7" fill="#f2f5f9"/></svg>
<svg style="left:0;top:0" width="541" height="803" viewBox="361 90 541 803"><g fill="none" stroke="#e6eef7" stroke-width="1.75"><path d="M423.98,255.67 V273.02 H430.85 A8.68,8.68 0 0 0 430.85,255.67 Z"/><path d="M443.88,267.10 H455.23 A5.68,5.92 0 1 0 454.09,270.65"/><path d="M467.58,261.99 C466.65,261.24 465.07,261.17 463.72,261.17 C461.52,261.17 460.03,262.09 460.03,263.52 C460.03,265.22 461.40,265.93 463.48,266.52 C465.92,267.16 467.62,268.20 467.62,270.03 C467.62,272.11 465.92,273.02 463.60,273.02 C461.77,273.02 460.31,272.24 459.32,271.02"/><path d="M474.30,260.30 V273.90"/><path d="M479.27,267.10 A5.73,5.92 0 1 0 490.73,267.10 A5.73,5.92 0 1 0 479.27,267.10 M490.73,260.30 V274.38 C490.73,278.40 480.50,278.40 479.88,276.05"/><path d="M496.38,260.30 V273.90 M496.38,267.10 A6.38,5.92 0 0 1 509.12,267.10 V273.90"/><path d="M530.48,261.99 C529.53,261.24 527.90,261.17 526.52,261.17 C524.27,261.17 522.74,262.09 522.74,263.52 C522.74,265.22 524.15,265.93 526.28,266.52 C528.78,267.16 530.52,268.20 530.52,270.03 C530.52,272.11 528.78,273.02 526.40,273.02 C524.53,273.02 523.03,272.24 522.01,271.02"/><path d="M536.94,255.75 V269.17 Q536.94,273.02 540.79,273.02 H542.10 M533.50,261.17 H541.80"/><path d="M545.08,267.10 A5.38,5.92 0 1 0 555.83,267.10 A5.38,5.92 0 1 0 545.08,267.10 M555.83,260.30 V273.90"/><path d="M563.94,255.75 V269.17 Q563.94,273.02 567.79,273.02 H569.10 M560.50,261.17 H568.80"/><path d="M572.48,260.30 V267.10 A5.12,5.92 0 0 0 582.73,267.10 M582.73,260.30 V273.90"/><path d="M597.28,261.99 C596.28,261.24 594.57,261.17 593.13,261.17 C590.77,261.17 589.16,262.09 589.16,263.52 C589.16,265.22 590.64,265.93 592.87,266.52 C595.49,267.16 597.33,268.20 597.33,270.03 C597.33,272.11 595.49,273.02 593.00,273.02 C591.04,273.02 589.46,272.24 588.40,271.02"/></g><circle cx="474.30" cy="255.95" r="1.40" fill="#e6eef7"/><g fill="none" stroke="#e6eef7" stroke-width="1.8"><path d="M435.54,732.56 C434.17,731.40 431.85,731.30 429.88,731.30 C426.66,731.30 424.46,732.71 424.46,734.92 C424.46,737.54 426.48,738.64 429.52,739.55 C433.10,740.54 435.60,742.15 435.60,744.97 C435.60,748.19 433.10,749.60 429.70,749.60 C427.02,749.60 424.87,748.39 423.42,746.51"/><path d="M442.00,736.30 V743.40 A4.65,6.20 0 0 0 451.30,743.40 M451.30,736.30 V750.50"/><path d="M457.10,743.40 A7.00,6.20 0 1 0 471.10,743.40 A7.00,6.20 0 1 0 457.10,743.40 M457.10,736.30 V755.52"/><path d="M475.10,743.40 A6.70,6.20 0 1 0 488.50,743.40 A6.70,6.20 0 1 0 475.10,743.40 M475.10,736.30 V755.52"/><path d="M492.30,743.40 A7.40,6.20 0 1 0 507.10,743.40 A7.40,6.20 0 1 0 492.30,743.40"/><path d="M510.50,736.30 V750.50 M510.50,744.11 Q510.90,737.20 517.10,737.20"/><path d="M520.40,731.40 V745.64 Q520.40,749.60 524.36,749.60 H527.30 M515.80,737.20 H527.00"/><path d="M532.50,736.30 V750.50"/><path d="M538.30,736.30 V750.50 M538.30,743.40 A5.60,6.20 0 0 1 549.50,743.40 V750.50"/><path d="M553.90,743.40 A6.50,6.20 0 1 0 566.90,743.40 A6.50,6.20 0 1 0 553.90,743.40 M566.90,736.30 V751.00 C566.90,755.23 555.16,755.23 554.50,752.76"/><path d="M581.20,730.40 V750.50"/><path d="M587.80,736.30 V750.50"/><path d="M594.20,736.30 V750.50 M594.20,743.40 A5.25,6.20 0 0 1 604.70,743.40 V750.50"/><path d="M610.70,730.40 V750.50 M621.73,736.30 L610.70,745.96 M614.68,742.69 L622.00,750.50"/><path d="M633.46,738.06 C632.50,737.27 630.86,737.20 629.47,737.20 C627.21,737.20 625.66,738.15 625.66,739.66 C625.66,741.43 627.08,742.17 629.23,742.79 C631.74,743.46 633.50,744.55 633.50,746.46 C633.50,748.65 631.74,749.60 629.35,749.60 C627.47,749.60 625.96,748.78 624.93,747.50"/></g><circle cx="532.50" cy="731.61" r="1.44" fill="#e6eef7"/><circle cx="587.80" cy="731.61" r="1.44" fill="#e6eef7"/></svg>
<div class="r" style="left:244.9px;top:159.8px;width:15px;height:15px;border-radius:50%;background:#fff;"></div>
<div class="t" style="left:244.9px;top:159.8px;width:15px;text-align:center;font-size:10.5px;line-height:15px;font-weight:normal;-webkit-text-stroke:0.45px #34445e;color:#34445e;">?</div>
<div class="r" style="left:281.5px;top:635.5px;width:15px;height:15px;border-radius:50%;background:#fff;"></div>
<div class="t" style="left:281.5px;top:635.5px;width:15px;text-align:center;font-size:10.5px;line-height:15px;font-weight:normal;-webkit-text-stroke:0.45px #34445e;color:#34445e;">?</div>
<div class="r" style="left:60px;top:199px;width:600px;height:359px;background:#fff;border-radius:8px 8px 0 0;border-top:6.5px solid #f7c244;box-sizing:border-box;box-shadow:0 6px 18px rgba(0,8,25,0.85);"></div>
<div class="r" style="left:60px;top:243px;width:600px;height:42px;background:#e1edf5;"></div>
<div class="r" style="left:60px;top:284px;width:600px;height:1px;background:#d4dde5;"></div>
<svg style="left:0;top:0" width="541" height="803" viewBox="361 90 541 803"><g transform="translate(433.2,307.6) rotate(42.5)" filter="url(#pb)"><rect x="0" y="-2.6" width="3.4" height="5.2" rx="1.3" fill="#ec7fa0"/><rect x="3.2" y="-2.6" width="1.8" height="5.2" fill="#5a5a66"/><rect x="5" y="-2.6" width="10.6" height="5.2" fill="#f6b622"/><rect x="5" y="-0.9" width="10.6" height="1.8" fill="#fcc93a"/><path d="M15.6,-2.6 L19.8,0 L15.6,2.6Z" fill="#f0d0a0"/><path d="M18.2,-1 L19.9,0 L18.2,1Z" fill="#4a4a55"/></g><defs><filter id="pb"><feGaussianBlur stdDeviation="0.35"/></filter></defs></svg>
<div class="t" style="left:93.3px;top:217.9px;font-size:14px;line-height:14px;color:#2a2f38;font-weight:normal;letter-spacing:0px;-webkit-text-stroke:0.35px #2a2f38;">Work in Progress</div>
<div class="t" style="left:72.1px;top:256.6px;font-size:14px;line-height:14px;color:#6b7280;font-weight:normal;letter-spacing:1.9px;-webkit-text-stroke:0.3px #6b7280;">CHECKLIST</div>
<div class="t" style="left:271.9px;top:256.6px;font-size:14px;line-height:14px;color:#6b7280;font-weight:normal;letter-spacing:1.65px;-webkit-text-stroke:0.3px #6b7280;">REVIEWER</div>
<div class="t" style="left:454.6px;top:256.6px;font-size:14px;line-height:14px;color:#6b7280;font-weight:normal;letter-spacing:1.75px;-webkit-text-stroke:0.3px #6b7280;">REVIEW DATE</div>
<div class="r" style="left:60px;top:329.5px;width:600px;height:1px;background:#e3e6ea;"></div>
<div class="t" style="left:71.5px;top:297.9px;font-size:18px;line-height:18px;color:#1b2741;font-weight:bold;letter-spacing:1.75px;">ADA</div>
<div class="t" style="left:272.4px;top:300.0px;font-size:13.2px;line-height:13.2px;color:#3f4654;font-weight:normal;letter-spacing:0.15px;">Pauline</div>
<div class="t" style="left:454.6px;top:300.0px;font-size:13.2px;line-height:13.2px;color:#3f4654;font-weight:normal;letter-spacing:0.35px;">12/23/23</div>
<div class="r" style="left:60px;top:375.5px;width:600px;height:1px;background:#e3e6ea;"></div>
<div class="t" style="left:71.5px;top:343.3px;font-size:18px;line-height:18px;color:#1b2741;font-weight:bold;letter-spacing:0.6px;">Design System</div>
<div class="t" style="left:272.4px;top:345.4px;font-size:13.2px;line-height:13.2px;color:#3f4654;font-weight:normal;letter-spacing:0.15px;">Frederick</div>
<div class="t" style="left:454.6px;top:345.4px;font-size:13.2px;line-height:13.2px;color:#3f4654;font-weight:normal;letter-spacing:0.35px;">MM/DD/YY</div>
<div class="r" style="left:60px;top:420.5px;width:600px;height:1px;background:#e3e6ea;"></div>
<div class="t" style="left:71.5px;top:388.7px;font-size:18px;line-height:18px;color:#1b2741;font-weight:bold;letter-spacing:0.98px;">Development</div>
<div class="t" style="left:272.4px;top:390.8px;font-size:13.2px;line-height:13.2px;color:#3f4654;font-weight:normal;letter-spacing:0.15px;">Gayatri</div>
<div class="t" style="left:454.6px;top:390.8px;font-size:13.2px;line-height:13.2px;color:#3f4654;font-weight:normal;letter-spacing:0.35px;">MM/DD/YY</div>
<div class="r" style="left:60px;top:466.5px;width:600px;height:1px;background:#e3e6ea;"></div>
<div class="t" style="left:71.5px;top:434.1px;font-size:18px;line-height:18px;color:#1b2741;font-weight:bold;letter-spacing:1.17px;">UX Writer</div>
<div class="t" style="left:272.4px;top:436.2px;font-size:13.2px;line-height:13.2px;color:#3f4654;font-weight:normal;letter-spacing:0.15px;">Rosemary</div>
<div class="t" style="left:454.6px;top:436.2px;font-size:13.2px;line-height:13.2px;color:#3f4654;font-weight:normal;letter-spacing:0.35px;">MM/DD/YY</div>
<div class="t" style="left:71.5px;top:479.5px;font-size:18px;line-height:18px;color:#1b2741;font-weight:bold;letter-spacing:0.94px;">UX Managment</div>
<div class="t" style="left:272.4px;top:481.6px;font-size:13.2px;line-height:13.2px;color:#3f4654;font-weight:normal;letter-spacing:0.15px;">Kim</div>
<div class="t" style="left:454.6px;top:481.6px;font-size:13.2px;line-height:13.2px;color:#3f4654;font-weight:normal;letter-spacing:0.35px;">MM/DD/YY</div>
<div class="t" style="left:71.5px;top:524.9px;font-size:18px;line-height:18px;color:#1b2741;font-weight:bold;letter-spacing:0.94px;">Brand / Marketing</div>
<div class="t" style="left:272.4px;top:527.0px;font-size:13.2px;line-height:13.2px;color:#3f4654;font-weight:normal;letter-spacing:0.15px;">John</div>
<div class="t" style="left:454.6px;top:527.0px;font-size:13.2px;line-height:13.2px;color:#3f4654;font-weight:normal;letter-spacing:0.35px;">MM/DD/YY</div>
<div class="r" style="left:259px;top:285px;width:1px;height:272px;background:#e3e6ea;"></div>
<div class="r" style="left:441px;top:285px;width:1px;height:272px;background:#e3e6ea;"></div>
<div class="r" style="left:60px;top:679px;width:600px;height:300px;background:#fff;border-radius:8px;box-shadow:0 4px 14px rgba(0,10,30,0.6);overflow:hidden;"><div style="position:absolute;left:0;top:0;width:600px;height:41px;background:#e1edf5;"></div></div>
<div class="r" style="left:60px;top:720px;width:600px;height:1px;background:#d4dde5;"></div>
<div class="t" style="left:72.1px;top:691.6px;font-size:14px;line-height:14px;color:#6b7280;font-weight:normal;letter-spacing:2.13px;-webkit-text-stroke:0.3px #6b7280;">TYPE</div>
<div class="t" style="left:200.1px;top:691.6px;font-size:14px;line-height:14px;color:#6b7280;font-weight:normal;letter-spacing:1.7px;-webkit-text-stroke:0.3px #6b7280;">DEVICE</div>
<div class="t" style="left:288.7px;top:691.6px;font-size:14px;line-height:14px;color:#6b7280;font-weight:normal;letter-spacing:1.85px;-webkit-text-stroke:0.3px #6b7280;">DESCRIPTION</div>
<div class="r" style="left:60px;top:758px;width:600px;height:1px;background:#e3e6ea;"></div>
<div class="t" style="left:71.6px;top:731.7px;font-size:12.6px;line-height:12.6px;color:#1b2741;font-weight:bold;letter-spacing:0.2px;">Prototype</div>
<div class="t" style="left:199.4px;top:731.2px;font-size:13.2px;line-height:13.2px;color:#3f4654;font-weight:normal;letter-spacing:0.5px;">Desktop</div>
<div class="t" style="left:289.0px;top:731.2px;font-size:13.2px;line-height:13.2px;color:#3f4654;font-weight:normal;letter-spacing:0.32px;">Description</div>
<div class="r" style="left:60px;top:796px;width:600px;height:1px;background:#e3e6ea;"></div>
<div class="t" style="left:71.6px;top:769.5px;font-size:12.6px;line-height:12.6px;color:#1b2741;font-weight:bold;letter-spacing:0.2px;">Prototype</div>
<div class="t" style="left:199.4px;top:769.0px;font-size:13.2px;line-height:13.2px;color:#3f4654;font-weight:normal;letter-spacing:0.5px;">Desktop</div>
<div class="t" style="left:289.0px;top:769.0px;font-size:13.2px;line-height:13.2px;color:#3f4654;font-weight:normal;letter-spacing:0.32px;">Description</div>
<div class="r" style="left:60px;top:834px;width:600px;height:1px;background:#e3e6ea;"></div>
<div class="t" style="left:71.6px;top:807.3px;font-size:12.6px;line-height:12.6px;color:#1b2741;font-weight:bold;letter-spacing:0.2px;">Prototype</div>
<div class="t" style="left:199.4px;top:806.8px;font-size:13.2px;line-height:13.2px;color:#3f4654;font-weight:normal;letter-spacing:0.5px;">Desktop</div>
<div class="t" style="left:289.0px;top:806.8px;font-size:13.2px;line-height:13.2px;color:#3f4654;font-weight:normal;letter-spacing:0.32px;">Description</div>
<div class="r" style="left:187.5px;top:721px;width:1px;height:90px;background:#e3e6ea;"></div>
<div class="r" style="left:276.5px;top:721px;width:1px;height:90px;background:#e3e6ea;"></div>
<svg style="left:251px;top:274px" width="10" height="12" viewBox="0 0 10 12"><path d="M1 1 L8.5 6.5 L5 7 L6.8 10.5 L5.5 11.2 L3.8 7.8 L1 10Z" fill="#111" stroke="#fff" stroke-width="0.6"/></svg>
<div class="r" style="left:533.5px;top:26px;width:5px;height:346px;background:transparent;border:1px solid rgba(220,225,235,0.2);border-radius:3px;box-sizing:border-box;"></div>
<div class="r" style="left:533.8px;top:200px;width:4.2px;height:172px;background:rgba(135,140,150,0.75);border-radius:2px;"></div>
</div>
<div class="r" style="left:296px;top:890.5px;width:245px;height:2.5px;background:rgba(150,154,160,0.75);border-radius:1px;"></div>
<svg style="left:136px;top:750px" width="150" height="143" viewBox="136 750 150 143"><defs><clipPath id="cc"><circle cx="208.8" cy="823.3" r="69"/></clipPath><filter id="bl" x="-10%" y="-10%" width="120%" height="120%"><feGaussianBlur stdDeviation="1.3"/></filter><radialGradient id="bgp" cx="0.45" cy="0.15" r="0.7"><stop offset="0" stop-color="#e88aa8"/><stop offset="0.35" stop-color="#c898b8"/><stop offset="1" stop-color="#a888a8"/></radialGradient></defs><g clip-path="url(#cc)"><g filter="url(#bl)"><rect x="136" y="750" width="150" height="143" fill="url(#bgp)"/><polygon points="136,800 150,785 192,768 215,775 205,792 150,810 136,815" fill="#a89a6c"/><polygon points="168,780 194,774 200,788 172,792" fill="#d8d0d8"/><polygon points="136,815 160,810 160,850 136,860" fill="#5a4a40"/><polygon points="140,822 164,818 166,855 140,860" fill="#b4bce8"/><polygon points="150,822 166,818 168,840 152,842" fill="#151418"/><polygon points="136,858 170,852 175,893 136,893" fill="#7a5868"/><polygon points="160,792 203,786 210,830 200,870 165,870" fill="#1a1f2e"/><ellipse cx="215" cy="773" rx="16" ry="10" fill="#ec8aa4"/><circle cx="219.4" cy="762" r="3.5" fill="#f8f4f8"/><circle cx="206" cy="781" r="2.5" fill="#f8e090"/><rect x="246" y="813" width="40" height="80" fill="#946e84"/><path d="M204,803 Q205,794 225,794 Q246,794 247,805 L247,825 Q244,838 232,843 Q224,846 217,842 Q206,835 204,822 Z" fill="#d4929c"/><ellipse cx="222" cy="806" rx="10" ry="7" fill="#e6a6b6"/><ellipse cx="247.5" cy="819" rx="3" ry="6" fill="#b88088"/><path d="M202,800 Q200,783 214,777 L222,773 L230,775 L239,771 L244,778 Q253,787 250,802 L247,806 Q243,797 226,796 Q209,796 205,806 Z" fill="#4a2a32"/><path d="M203,818 Q213,815 223,819 Q235,815 246,815" stroke="#ead6de" stroke-width="1" fill="none"/><polygon points="160,893 163,852 178,831 210,826 222,846 238,833 250,830 271,849 286,893" fill="#141016"/><ellipse cx="221.5" cy="853" rx="7.5" ry="9" fill="#0a0a0c"/><rect x="219" y="858" width="6" height="35" fill="#0a0a0c"/></g></g><circle cx="208.8" cy="823.3" r="68.5" fill="none" stroke="rgba(0,0,0,0.25)" stroke-width="1"/></svg>
</body></html>
